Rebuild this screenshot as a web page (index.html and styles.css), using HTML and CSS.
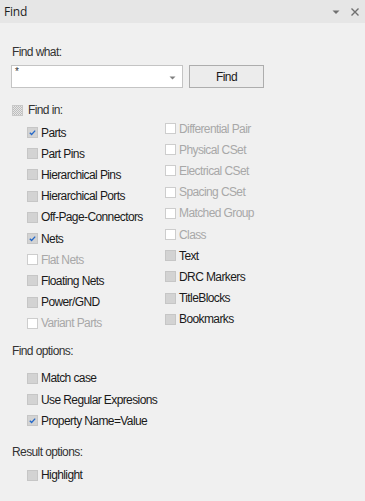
FILE: index.html
```html
<!DOCTYPE html>
<html>
<head>
<meta charset="utf-8">
<link rel="stylesheet" href="styles.css">
</head>
<body>
<div class="panel">
  <div class="titlebar">
    <span class="title">Find</span>
    <div class="tools">
      <svg class="ico" width="10" height="10" viewBox="0 0 10 10"><path d="M1.5 3.5 L8.5 3.5 L5 7 Z" fill="#707070"/></svg>
      <svg class="ico" width="10" height="10" viewBox="0 0 10 10"><path d="M1.5 1.5 L8.5 8.5 M8.5 1.5 L1.5 8.5" stroke="#707070" stroke-width="1.4"/></svg>
    </div>
  </div>
  <div class="content">
    <div class="label first">Find what:</div>
    <div class="findrow">
      <div class="combo">
        <span class="combo-text">*</span>
        <svg class="combo-arrow" width="7" height="4" viewBox="0 0 7 4"><path d="M0.5 0.5 L6.5 0.5 L3.5 3.5 Z" fill="#808080"/></svg>
      </div>
      <div class="btn">Find</div>
    </div>

    <div class="label findin"><span class="cb indet"></span>Find in:</div>

    <div class="cols">
      <div class="col left">
        <div class="row"><span class="cb checked"><svg viewBox="0 0 11 11"><path d="M2.2 5.8 L4.4 8 L8.8 3.2" fill="none" stroke="#2468c8" stroke-width="1.6"/></svg></span>Parts</div>
        <div class="row"><span class="cb"></span>Part Pins</div>
        <div class="row"><span class="cb"></span>Hierarchical Pins</div>
        <div class="row"><span class="cb"></span>Hierarchical Ports</div>
        <div class="row"><span class="cb"></span>Off-Page-Connectors</div>
        <div class="row"><span class="cb checked"><svg viewBox="0 0 11 11"><path d="M2.2 5.8 L4.4 8 L8.8 3.2" fill="none" stroke="#2468c8" stroke-width="1.6"/></svg></span>Nets</div>
        <div class="row disabled"><span class="cb"></span>Flat Nets</div>
        <div class="row"><span class="cb"></span>Floating Nets</div>
        <div class="row"><span class="cb"></span>Power/GND</div>
        <div class="row disabled"><span class="cb"></span>Variant Parts</div>
      </div>
      <div class="col right">
        <div class="row disabled"><span class="cb"></span>Differential Pair</div>
        <div class="row disabled"><span class="cb"></span>Physical CSet</div>
        <div class="row disabled"><span class="cb"></span>Electrical CSet</div>
        <div class="row disabled"><span class="cb"></span>Spacing CSet</div>
        <div class="row disabled"><span class="cb"></span>Matched Group</div>
        <div class="row disabled"><span class="cb"></span>Class</div>
        <div class="row"><span class="cb"></span>Text</div>
        <div class="row"><span class="cb"></span>DRC Markers</div>
        <div class="row"><span class="cb"></span>TitleBlocks</div>
        <div class="row"><span class="cb"></span>Bookmarks</div>
      </div>
    </div>

    <div class="label options">Find options:</div>
    <div class="group opts">
      <div class="row"><span class="cb"></span>Match case</div>
      <div class="row"><span class="cb"></span>Use Regular Expresions</div>
      <div class="row"><span class="cb checked"><svg viewBox="0 0 11 11"><path d="M2.2 5.8 L4.4 8 L8.8 3.2" fill="none" stroke="#2468c8" stroke-width="1.6"/></svg></span>Property Name=Value</div>
    </div>

    <div class="label result">Result options:</div>
    <div class="group res">
      <div class="row"><span class="cb"></span>Highlight</div>
    </div>
  </div>
</div>
</body>
</html>
```

FILE: styles.css
```css
html, body {
  margin: 0;
  padding: 0;
  background: #f0f0f0;
}
body {
  width: 365px;
  height: 501px;
  overflow: hidden;
  font-family: "Liberation Sans", Arial, sans-serif;
  font-size: 12px;
  letter-spacing: -0.6px;
  color: #1a1a1a;
}
.titlebar {
  height: 23px;
  background: #e6e6e6;
  display: flex;
  align-items: center;
  justify-content: space-between;
  padding: 0 5px 0 4px;
}
.title {
  font-family: "Open Sans", sans-serif;
  font-size: 12px;
  letter-spacing: -0.2px;
  color: #1e1e1e;
}
.tools {
  display: flex;
  gap: 9px;
  align-items: center;
}
.ico { display: block; }
.content {
  padding: 0 12px;
}
.label {
  height: 16px;
  line-height: 16px;
  color: #333;
  display: flex;
  align-items: center;
}
.label.first { margin-top: 21px; }
.findrow {
  margin-top: 5px;
  height: 23px;
  display: flex;
  gap: 6px;
  margin-left: -1px;
}
.combo {
  width: 170px;
  height: 21px;
  background: #fff;
  border: 1px solid #c4c4c4;
  position: relative;
}
.combo-text {
  position: absolute;
  left: 3px;
  top: 0px;
  font-size: 10px;
  line-height: 12px;
  color: #333;
}
.combo-arrow {
  position: absolute;
  right: 6px;
  top: 10px;
}
.btn {
  width: 73px;
  height: 21px;
  border: 1px solid #adadad;
  background: #ececec;
  display: flex;
  align-items: center;
  justify-content: center;
  color: #1a1a1a;
}
.label.findin { margin-top: 14px; }
.findin .cb { margin-right: 5px; }
.cols {
  display: grid;
  grid-template-columns: 153px 1fr;
  margin-top: 4px;
}
.col.left { padding-left: 15px; }
.col.right { margin-top: -4px; }
.row {
  height: 21.2px;
  display: flex;
  align-items: center;
  white-space: nowrap;
}
.cb {
  width: 11px;
  height: 11px;
  box-sizing: border-box;
  border: 1px solid #c6c6c6;
  background: #d3d3d3;
  margin-right: 3px;
  flex: none;
  display: inline-block;
}
.cb svg { display: block; width: 9px; height: 9px; }
.cb.indet {
  background: repeating-conic-gradient(#bdbdbd 0 25%, #e6e6e6 0 50%) 0 0 / 2px 2px;
  border-color: #c8c8c8;
}
.row.disabled { color: #a8a8a8; }
.row.disabled .cb {
  background: #fff;
  border-color: #cdcdcd;
}
.label.options { margin-top: 9px; }
.group { padding-left: 15px; }
.group.opts { margin-top: 9px; }
.label.result { margin-top: 13px; }
.group.res { margin-top: 4px; }
```
